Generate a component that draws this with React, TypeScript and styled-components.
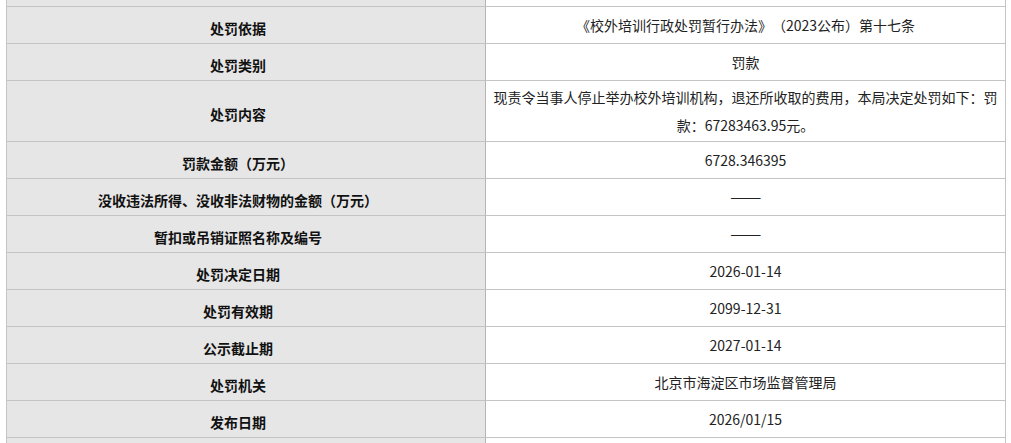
import * as React from 'react'
import styled, { createGlobalStyle } from 'styled-components'

const GlobalStyle = createGlobalStyle`
  html, body {
    margin: 0;
    padding: 0;
    background: #ffffff;
    overflow: hidden;
  }

  body {
    font-family: 'Noto Sans CJK SC', 'Noto Sans', sans-serif;
    font-size: 14px;
    color: #222222;
    text-spacing-trim: space-all;
  }
`

const Page = styled.div`
  height: 443px;
  overflow: hidden;
`

// detail grid: grey label column, white value column
const Grid = styled.div`
  display: grid;
  grid-template-columns: 479px 520px;
  width: 1000px;
  margin: -30px 0 0 6px;
  border-left: 1px solid #c4c4c4;
`

const LabelCell = styled.div<{ $tall?: boolean }>`
  box-sizing: border-box;
  height: ${({ $tall }) => ($tall ? 61 : 37)}px;
  display: flex;
  align-items: center;
  justify-content: center;
  padding: 6px 16px 0 0;
  background: #e6e6e6;
  border-right: 1px solid #b4b4b4;
  border-bottom: 1px solid #c4c4c4;
  line-height: 28px;
  font-weight: 700;
  color: #111111;
  text-align: center;
`

const ValueCell = styled.div<{ $tall?: boolean }>`
  box-sizing: border-box;
  height: ${({ $tall }) => ($tall ? 61 : 37)}px;
  display: flex;
  align-items: center;
  justify-content: center;
  padding: 0 7px;
  background: #ffffff;
  border-right: 1px solid #c4c4c4;
  border-bottom: 1px solid #c4c4c4;
  line-height: 28px;
  color: #222222;
  text-align: center;
`

// empty value placeholder, drawn wider than the CJK em dash
const Dash = styled.span`
  font-family: 'Liberation Sans', Arial, sans-serif;
  font-size: 15px;
  letter-spacing: -0.5px;
  color: #222222;
`

const rows: { label: string; value: React.ReactNode; tall?: boolean }[] = [
  { label: '处罚依据', value: '《校外培训行政处罚暂行办法》（2023公布）第十七条' },
  { label: '处罚类别', value: '罚款' },
  {
    label: '处罚内容',
    value:
      '现责令当事人停止举办校外培训机构，退还所收取的费用，本局决定处罚如下：罚款：67283463.95元。',
    tall: true,
  },
  { label: '罚款金额（万元）', value: '6728.346395' },
  { label: '没收违法所得、没收非法财物的金额（万元）', value: <Dash>——</Dash> },
  { label: '暂扣或吊销证照名称及编号', value: <Dash>——</Dash> },
  { label: '处罚决定日期', value: '2026-01-14' },
  { label: '处罚有效期', value: '2099-12-31' },
  { label: '公示截止期', value: '2027-01-14' },
  { label: '处罚机关', value: '北京市海淀区市场监督管理局' },
  { label: '发布日期', value: '2026/01/15' },
]

export default function App() {
  return (
    <Page lang="zh-CN">
      <GlobalStyle />
      <Grid>
        <LabelCell />
        <ValueCell />
        {rows.map((r) => (
          <React.Fragment key={r.label}>
            <LabelCell $tall={r.tall}>{r.label}</LabelCell>
            <ValueCell $tall={r.tall}>{r.value}</ValueCell>
          </React.Fragment>
        ))}
        <LabelCell />
        <ValueCell />
      </Grid>
    </Page>
  )
}
